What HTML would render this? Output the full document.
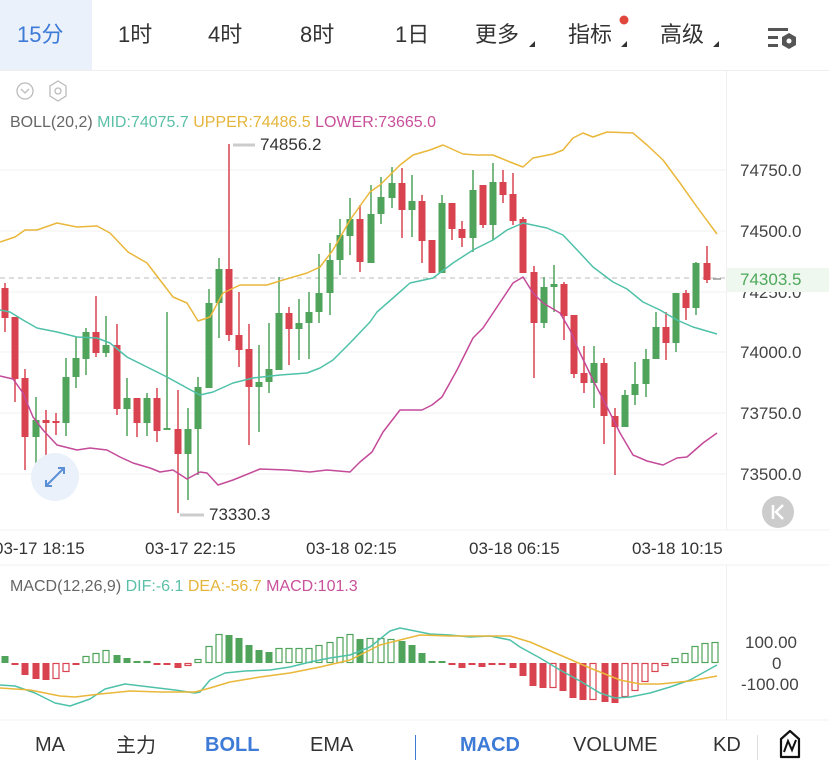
<!DOCTYPE html>
<html><head><meta charset="utf-8"><style>
body{margin:0;width:829px;height:784px;overflow:hidden;background:#fff;font-family:"Liberation Sans","Noto Sans CJK SC",sans-serif;position:relative}
.t{position:absolute;white-space:nowrap}
.hd{font-size:22px;color:#333;top:19px;line-height:32px}
.ax{font-size:17px;color:#444}
.bt{font-size:20px;color:#333;top:734px}
</style></head><body>
<div style="position:absolute;left:0;top:0;width:92px;height:70px;background:#eaf1fb"></div>
<div class="t hd" style="left:17px;color:#3d7bd6">15分</div>
<div class="t hd" style="left:118px">1时</div>
<div class="t hd" style="left:208px">4时</div>
<div class="t hd" style="left:300px">8时</div>
<div class="t hd" style="left:395px">1日</div>
<div class="t hd" style="left:475px">更多</div>
<div class="t hd" style="left:568px">指标</div>
<div class="t hd" style="left:660px">高级</div>
<div style="position:absolute;left:0;top:70px;width:829px;height:1px;background:#eee"></div>
<div class="t" style="left:10px;top:114px;font-size:16px;color:#666">BOLL(20,2) <span style="color:#5cc0a8">MID:74075.7</span> <span style="color:#e5b53b">UPPER:74486.5</span> <span style="color:#c9509b">LOWER:73665.0</span></div>
<div class="t" style="left:10px;top:578px;font-size:16px;color:#666">MACD(12,26,9) <span style="color:#5cc0a8">DIF:-6.1</span> <span style="color:#e5b53b">DEA:-56.7</span> <span style="color:#c9509b">MACD:101.3</span></div>
<div class="t ax" style="left:740px;top:161px">74750.0</div>
<div class="t ax" style="left:740px;top:222px">74500.0</div>
<div class="t ax" style="left:740px;top:283px">74250.0</div>
<div class="t ax" style="left:740px;top:343px">74000.0</div>
<div class="t ax" style="left:740px;top:404px">73750.0</div>
<div class="t ax" style="left:740px;top:465px">73500.0</div>
<div style="position:absolute;left:727px;top:268px;width:102px;height:24px;background:#eef8ef"></div>
<div class="t ax" style="left:740px;top:270px;color:#4ea85b">74303.5</div>
<div class="t ax" style="left:745px;top:633px">100.00</div>
<div class="t ax" style="left:772px;top:654px">0</div>
<div class="t ax" style="left:741px;top:675px">-100.00</div>
<div class="t ax" style="left:260px;top:135px;color:#333">74856.2</div>
<div class="t ax" style="left:209px;top:505px;color:#333">73330.3</div>
<div class="t ax" style="left:-6px;top:539px;color:#333">03-17 18:15</div>
<div class="t ax" style="left:145px;top:539px;color:#333">03-17 22:15</div>
<div class="t ax" style="left:306px;top:539px;color:#333">03-18 02:15</div>
<div class="t ax" style="left:469px;top:539px;color:#333">03-18 06:15</div>
<div class="t ax" style="left:632px;top:539px;color:#333">03-18 10:15</div>
<div class="t bt" style="left:35px">MA</div>
<div class="t bt" style="left:116px;top:730px;line-height:32px">主力</div>
<div class="t bt" style="left:205px;color:#3d7bd6;font-weight:bold">BOLL</div>
<div class="t bt" style="left:310px">EMA</div>
<div class="t bt" style="left:460px;color:#3d7bd6;font-weight:bold">MACD</div>
<div class="t bt" style="left:573px">VOLUME</div>
<div class="t bt" style="left:713px">KD</div>
<svg id="s" width="829" height="784" style="position:absolute;left:0;top:0" xmlns="http://www.w3.org/2000/svg">
<g stroke="#f0f0f0" stroke-width="1">
<line x1="0" y1="170" x2="726" y2="170"/><line x1="0" y1="231" x2="726" y2="231"/><line x1="0" y1="292" x2="726" y2="292"/><line x1="0" y1="352" x2="726" y2="352"/><line x1="0" y1="413" x2="726" y2="413"/><line x1="0" y1="474" x2="726" y2="474"/>
<line x1="726.5" y1="71" x2="726.5" y2="530"/><line x1="726.5" y1="565" x2="726.5" y2="720"/>
<line x1="0" y1="530" x2="829" y2="530"/><line x1="0" y1="565" x2="829" y2="565"/><line x1="0" y1="720" x2="829" y2="720"/>
</g>
<line x1="0" y1="278" x2="726" y2="278" stroke="#bbb" stroke-dasharray="5,4" stroke-width="1"/>
<line x1="233" y1="145" x2="255" y2="145" stroke="#ccc" stroke-width="3"/>
<line x1="180" y1="515" x2="204" y2="515" stroke="#ccc" stroke-width="3"/>
<line x1="415.5" y1="735" x2="415.5" y2="760" stroke="#3d7bd6" stroke-width="1"/>
<line x1="757.5" y1="735" x2="757.5" y2="760" stroke="#ddd" stroke-width="1"/>
<g id="c"></g>
<g fill="none" stroke-width="1.5" stroke-linejoin="round">
<polyline stroke="#e9b73a" points="0,242 15,237 25,230 37,230 57,223 77,227 97,226 110,233 128,252 147,263 160,280 173,297 187,303 198,321 210,317 223,293 240,285 267,285 283,280 307,273 320,267 333,250 350,220 370,192 380,185 400,165 413,155 430,150 443,145 463,154 477,155 493,155 510,162 523,167 533,158 553,154 563,150 573,138 583,133 593,137 607,132 633,133 647,145 663,160 680,183 697,207 717,234"/>
<polyline stroke="#4fc1a9" points="0,310 10,312 23,320 37,328 57,332 77,337 97,338 110,343 127,357 147,367 167,377 187,388 200,395 213,392 233,383 253,378 280,375 307,373 320,368 333,360 350,343 370,322 377,312 393,298 410,283 433,278 453,263 473,250 493,240 507,230 523,223 547,228 563,235 580,253 593,267 613,282 627,289 643,302 660,310 677,320 693,327 717,334"/>
<polyline stroke="#c44a9a" points="0,376 13,379 23,393 33,417 43,430 57,445 77,450 90,448 107,450 120,457 133,463 150,468 160,472 173,470 187,479 200,472 207,473 218,485 233,480 260,469 287,470 310,472 327,470 350,472 360,462 372,452 383,432 400,410 422,410 432,405 442,397 457,370 473,338 483,328 493,313 503,298 513,283 523,277 533,293 543,303 560,313 570,330 580,353 593,380 607,407 620,433 633,455 647,461 663,465 677,458 687,457 703,443 717,433"/>
<polyline stroke="#4fc1a9" points="0,685 15,686 35,693 55,703 70,706 90,699 105,689 125,684 150,687 175,690 195,693 200,692 210,680 225,673 245,671 270,670 290,667 310,662 330,658 350,655 370,647 390,631 400,628 430,634 450,635 470,637 490,636 510,640 520,647 540,658 560,670 580,681 600,693 615,698 630,697 650,693 670,687 690,680 717,665"/>
<polyline stroke="#e9b73a" points="0,688 30,690 60,696 75,697 100,694 130,691 160,692 195,692 210,688 230,682 260,677 290,673 320,667 350,660 380,645 400,640 420,635 450,636 510,636 530,642 560,655 590,668 620,680 640,684 660,684 690,681 717,676"/>
</g>
<circle cx="25" cy="91" r="8" fill="none" stroke="#bbb" stroke-width="1.3"/><path d="M21 89 L25 93 L29 89" fill="none" stroke="#bbb" stroke-width="1.3"/>
<path d="M58 81 L66 86 L66 96 L58 101 L50 96 L50 86 Z" fill="none" stroke="#bbb" stroke-width="1.3"/><circle cx="58" cy="91" r="3" fill="none" stroke="#bbb" stroke-width="1.3"/>
<circle cx="55" cy="477" r="24" fill="#eaf1fb"/>
<path d="M46 486 L64 468 M58 468 L64 468 L64 474 M46 480 L46 486 L52 486" fill="none" stroke="#5b8fd6" stroke-width="2"/>
<circle cx="778" cy="512" r="16" fill="#ccc"/><path d="M773 505 V519 M783 505 L776 512 L783 519" fill="none" stroke="#fff" stroke-width="2.5"/>
<path d="M529 47 L535 47 L535 41 Z M621 47 L627 47 L627 41 Z M713 47 L719 47 L719 41 Z" fill="#333"/>
<circle cx="624" cy="20" r="4.5" fill="#e0463c"/>
<g fill="#555"><rect x="768" y="28" width="20" height="3"/><rect x="768" y="36" width="10" height="3"/><rect x="768" y="44" width="10" height="3"/></g>
<path d="M789 33 L796 37 L796 45 L789 49 L782 45 L782 37 Z" fill="#555"/><circle cx="789" cy="41" r="2.5" fill="#fff"/>
<path d="M781 739 L790 731 L799 739 L799 757 L781 757 Z" fill="none" stroke="#111" stroke-width="2.2" stroke-linejoin="round"/>
<path d="M784 752 L788 741 L792 750 L796 740" fill="none" stroke="#111" stroke-width="2"/>
</svg>
<script>
var G="#4fa35a",R="#d9434f",ns="http://www.w3.org/2000/svg",g=document.getElementById('c');
function el(n,a){var e=document.createElementNS(ns,n);for(var k in a)e.setAttribute(k,a[k]);g.appendChild(e);}
var C=[[5,288,318,283,332,R],[15,317,379,317,402,R],[25,378,437,369,470,R],[36,420,437,397,463,G],[46,420,423,410,457,R],[56,421,423,413,435,R],[66,377,423,358,436,G],[76,358,377,337,388,G],[86,332,359,328,375,G],[96,332,353,296,357,R],[106,345,353,316,357,G],[117,345,409,324,415,R],[127,398,409,378,436,G],[137,398,423,398,437,R],[147,398,423,393,436,G],[157,398,431,388,442,R],[167,428,430,312,430,G],[178,429,454,390,513,R],[188,429,454,408,500,G],[198,387,429,377,475,G],[209,303,388,289,388,G],[219,269,303,258,338,G],[229,269,335,144,341,R],[239,335,350,292,367,R],[249,349,387,324,445,R],[259,382,387,345,432,G],[269,369,382,323,393,G],[279,313,370,277,370,G],[289,313,329,307,365,R],[299,323,329,299,360,G],[309,312,323,292,359,G],[319,293,312,254,323,G],[330,260,293,243,315,G],[340,235,260,219,275,G],[350,219,236,198,255,G],[360,219,262,205,272,R],[371,214,263,185,263,G],[381,197,214,177,224,G],[392,183,198,167,208,G],[402,183,210,168,238,R],[412,201,210,175,237,G],[422,201,241,195,263,R],[432,240,273,240,273,R],[442,203,273,195,273,G],[452,203,229,203,240,R],[462,229,238,221,247,R],[473,190,238,170,252,G],[483,185,225,185,228,R],[493,182,225,163,240,G],[503,182,195,170,203,R],[513,194,221,173,225,R],[523,219,273,217,273,R],[534,272,323,266,378,R],[544,287,323,277,328,G],[554,284,287,265,312,G],[564,284,316,282,340,R],[574,315,374,315,378,R],[584,373,383,346,393,R],[594,363,383,346,408,G],[604,363,416,358,444,R],[615,416,427,408,475,R],[625,395,427,390,427,G],[635,384,395,362,405,G],[646,359,384,349,397,G],[656,327,359,312,359,G],[666,327,343,312,360,R],[676,293,343,293,352,G],[686,293,308,290,320,R],[696,263,308,262,315,G],[707,263,280,246,283,R]];
C.forEach(function(c){el('line',{x1:c[0],x2:c[0],y1:c[3],y2:c[4],stroke:c[5],'stroke-width':1.5});el('rect',{x:c[0]-3.5,y:c[1],width:7,height:Math.max(2,c[2]-c[1]),fill:c[5]});});
el('line',{x1:713,x2:721,y1:279,y2:279,stroke:'#999','stroke-width':1.5});
var M=[[5,7,1],[15,-2,1],[25,-12,1],[36,-16,1],[46,-17,1],[56,-16,0],[66,-9,0],[76,-2,1],[86,7,0],[96,10,0],[106,13,0],[117,8,1],[127,5,1],[137,2,1],[147,2,0],[157,-1,1],[167,-2,1],[178,-5,1],[188,-3,0],[198,4,0],[209,17,0],[219,29,0],[229,28,1],[239,25,1],[249,18,1],[259,13,1],[269,11,1],[279,15,0],[289,15,0],[299,15,0],[309,15,0],[319,18,0],[330,21,0],[340,26,0],[350,29,0],[360,24,1],[370,25,0],[381,25,0],[391,24,0],[402,22,1],[412,18,1],[422,10,1],[432,1,1],[442,1,1],[452,-1,1],[462,-5,1],[472,-2,1],[482,-4,1],[492,-1,1],[502,-1,1],[513,-5,1],[523,-13,1],[533,-23,1],[543,-25,1],[553,-25,0],[563,-28,1],[573,-35,1],[583,-37,1],[593,-37,0],[605,-39,1],[615,-40,1],[625,-34,0],[635,-28,0],[645,-19,0],[655,-9,0],[665,-3,0],[675,5,0],[685,10,0],[695,17,0],[705,20,0],[715,21,0]];
var Z=663;
M.forEach(function(m){var col=m[1]>=0?G:R,h=Math.max(2,Math.abs(m[1])),y=m[1]>=0?Z-h:Z;
if(m[2])el('rect',{x:m[0]-3.5,y:y,width:7,height:h,fill:col});
else el('rect',{x:m[0]-3,y:y+0.5,width:6,height:h-1,fill:'none',stroke:col,'stroke-width':1.2});});
</script>
</body></html>
